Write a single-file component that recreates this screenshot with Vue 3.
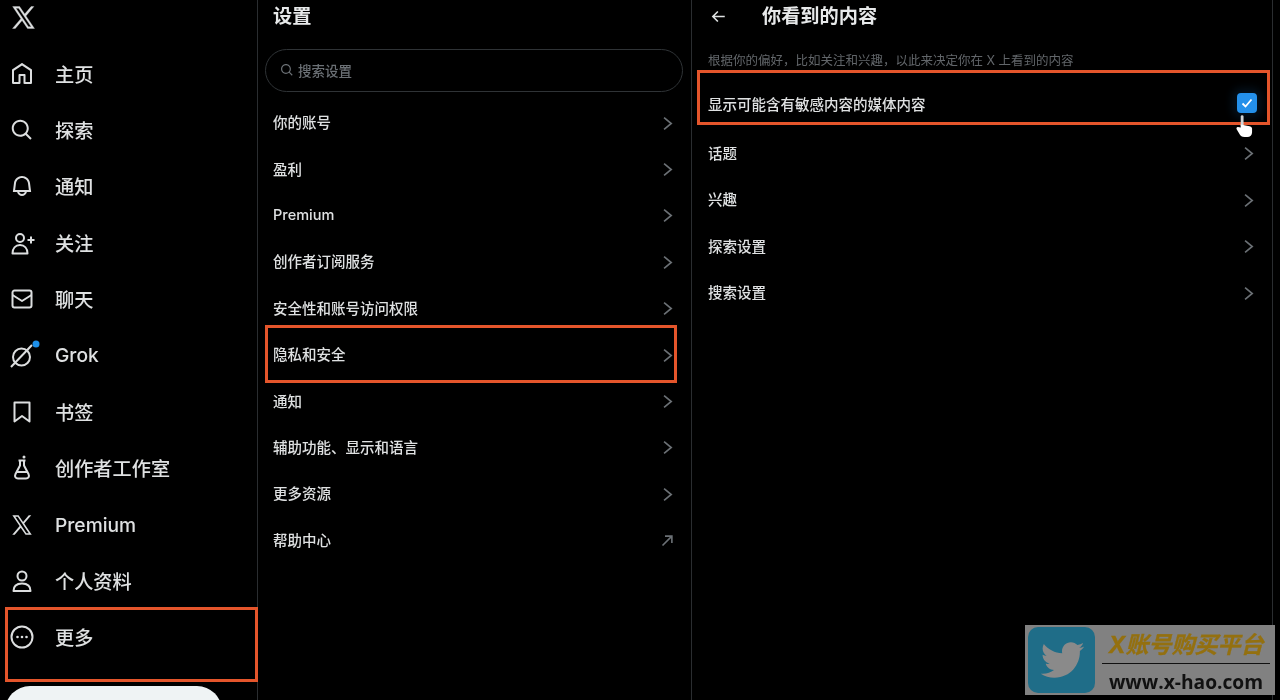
<script setup>
const xLogo = 'M21.742 21.75l-7.563-11.179 7.056-8.321h-2.456l-5.691 6.714-4.54-6.714H2.359l7.29 10.776L2.25 21.75h2.456l6.035-7.118 4.818 7.118h6.191-.008zM7.739 3.818L18.81 20.182h-2.447L5.29 3.818h2.447z'

const nav = [
  { label: '主页', fill: 'M21.591 7.146L12.52 1.157c-.316-.21-.724-.21-1.04 0l-9.071 5.99c-.26.173-.409.456-.409.757v13.183c0 .502.418.913.929.913h6.638c.511 0 .929-.41.929-.913v-7.075h3.008v7.075c0 .502.418.913.929.913h6.639c.51 0 .928-.41.928-.913V7.904c0-.301-.158-.584-.408-.758zM20 20l-4.5.01.011-7.097c0-.502-.418-.913-.928-.913H9.44c-.511 0-.929.41-.929.913L8.5 20H4V8.773l8.011-5.342L20 8.764z' },
  { label: '探索', fill: 'M10.25 3.75c-3.59 0-6.5 2.91-6.5 6.5s2.91 6.5 6.5 6.5c1.795 0 3.419-.726 4.596-1.904 1.178-1.177 1.904-2.801 1.904-4.596 0-3.59-2.91-6.5-6.5-6.5zm-8.5 6.5c0-4.694 3.806-8.5 8.5-8.5s8.5 3.806 8.5 8.5c0 1.986-.682 3.815-1.824 5.262l4.781 4.781-1.414 1.414-4.781-4.781c-1.447 1.142-3.276 1.824-5.262 1.824-4.694 0-8.5-3.806-8.5-8.5z' },
  { label: '通知', fill: 'M19.993 9.042C19.48 5.017 16.054 2 11.996 2s-7.49 3.021-7.999 7.051L2.866 18H7.1c.463 2.282 2.481 4 4.9 4s4.437-1.718 4.9-4h4.236l-1.143-8.958zM12 20c-1.306 0-2.417-.835-2.829-2h5.658c-.412 1.165-1.523 2-2.829 2zm-6.866-4l.847-6.698C6.364 6.272 8.941 4 11.996 4s5.627 2.268 6.013 5.295L18.864 16H5.134z' },
  { label: '关注', stroke: ['M10 3a4 4 0 1 0 0 8 4 4 0 0 0 0-8z', 'M2.500 22.500c0-5 3-8.500 7.500-8.500s7.500 3.500 7.500 8.500z', 'M21 5.500v7M17.500 9h7'] },
  { label: '聊天', stroke: ['M4.500 3.500h15a2 2 0 0 1 2 2v13a2 2 0 0 1-2 2h-15a2 2 0 0 1-2-2v-13a2 2 0 0 1 2-2z', 'M2.500 8l9.500 6 9.500-6'] },
  { label: 'Grok', stroke: ['M11.500 5.500a8.500 8.500 0 1 1 0 17 8.500 8.500 0 0 1 0-17z', 'M1 24 22 2'], dot: true },
  { label: '书签', stroke: ['M4.500 2.500h15v19l-7.500-5.500-7.500 5.500z'] },
  { label: '创作者工作室', stroke: ['M8.500 4.500h7', 'M10 4.500v5L5.500 18c-1.300 2.800.3 4.500 2.500 4.500h8c2.200 0 3.800-1.700 2.500-4.500L14 9.500v-5', 'M7 16h10'], flask: true },
  { label: 'Premium', fill: xLogo },
  { label: '个人资料', stroke: ['M12 2.500a4.500 4.500 0 1 0 0 9 4.500 4.500 0 0 0 0-9z', 'M3.500 22c0-5 3.500-7.500 8.500-7.500s8.500 2.500 8.500 7.500z'] },
  { label: '更多', stroke: ['M12 1.500a10.500 10.500 0 1 0 0 21 10.500 10.500 0 0 0 0-21z'], more: true },
]

const settings = ['你的账号', '盈利', 'Premium', '创作者订阅服务', '安全性和账号访问权限', '隐私和安全', '通知', '辅助功能、显示和语言', '更多资源', '帮助中心']
const contentRows = ['话题', '兴趣', '探索设置', '搜索设置']
</script>

<template>
  <div class="screen">
    <aside class="nav">
      <div class="logo-row">
        <svg class="logo" viewBox="0 0 24 24"><path :d="xLogo" fill="currentColor" stroke="currentColor" stroke-width="0.300" /></svg>
      </div>
      <div v-for="item in nav" :key="item.label" class="nav-item">
        <svg class="icon" viewBox="0 0 24 24">
          <path v-if="item.fill" :d="item.fill" fill="currentColor" />
          <path v-for="d in item.stroke || []" :key="d" :d="d" fill="none" stroke="currentColor" stroke-width="2" stroke-linejoin="round" />
          <circle v-if="item.dot" cx="26" cy="1" r="3.500" fill="#1d8fe8" />
          <circle v-if="item.flask" cx="14" cy="1" r="1.500" fill="currentColor" />
          <template v-if="item.more">
            <circle cx="7.500" cy="12" r="1.300" fill="currentColor" />
            <circle cx="12" cy="12" r="1.300" fill="currentColor" />
            <circle cx="16.500" cy="12" r="1.300" fill="currentColor" />
          </template>
        </svg>
        <span>{{ item.label }}</span>
      </div>
      <div class="post-btn"></div>
      <div class="mark mark-more"></div>
    </aside>

    <section class="settings">
      <h2 class="title settings-title">设置</h2>
      <div class="search">
        <svg class="search-icon" viewBox="0 0 24 24"><path :d="nav[1].fill" fill="currentColor" /></svg>
        <span>搜索设置</span>
      </div>
      <div class="rows">
        <div v-for="(row, i) in settings" :key="row" class="row">
          <span>{{ row }}</span>
          <svg v-if="i < settings.length - 1" class="chev" viewBox="0 0 24 24"><path d="M6.500 2.500 18 12 6.500 21.500" fill="none" stroke="currentColor" stroke-width="2.600" /></svg>
          <svg v-else class="chev" viewBox="0 0 24 24"><path d="M4 20 19 5M8 5h11v11" fill="none" stroke="currentColor" stroke-width="2.600" /></svg>
        </div>
      </div>
      <div class="mark mark-privacy"></div>
    </section>

    <section class="content">
      <header class="content-head">
        <svg class="back" viewBox="0 0 24 24"><path d="M3 12h19M11 4l-8 8 8 8" fill="none" stroke="currentColor" stroke-width="2.600" /></svg>
        <h2 class="title">你看到的内容</h2>
      </header>
      <p class="sub">根据你的偏好，比如关注和兴趣，以此来决定你在 X 上看到的内容</p>
      <div class="row row-check">
        <span>显示可能含有敏感内容的媒体内容</span>
        <span class="check">
          <svg viewBox="0 0 20 20"><path d="M5.500 10.500 8.500 13.500 14.500 6.500" fill="none" stroke="#fff" stroke-width="1.800" /></svg>
        </span>
      </div>
      <div v-for="row in contentRows" :key="row" class="row">
        <span>{{ row }}</span>
        <svg class="chev" viewBox="0 0 24 24"><path d="M6.500 2.500 18 12 6.500 21.500" fill="none" stroke="currentColor" stroke-width="2.600" /></svg>
      </div>
      <div class="mark mark-check"></div>
      <svg class="hand" viewBox="0 0 18 24">
        <path d="M6.500 1.500v10" stroke="#cfd3d6" stroke-width="3" fill="none" stroke-linecap="round" />
        <path d="M2 12.500c-1.500 0-2 1.500-1 3l3 5c1 1.500 2 2.500 5 2.500h3c3 0 5-2 5-5v-4c0-1.500-2-2.500-4-2.500L5 10v3z" fill="#fff" />
      </svg>
    </section>

    <aside class="badge">
      <div class="badge-logo">
        <svg viewBox="0 0 24 24"><path d="M23.643 4.937c-.835.37-1.732.62-2.675.733.962-.576 1.7-1.49 2.048-2.578-.9.534-1.897.922-2.958 1.13-.85-.904-2.06-1.47-3.4-1.47-2.572 0-4.658 2.086-4.658 4.66 0 .364.042.718.12 1.06-3.873-.195-7.304-2.05-9.602-4.868-.4.69-.63 1.49-.63 2.342 0 1.616.823 3.043 2.072 3.878-.764-.025-1.482-.234-2.11-.583v.06c0 2.257 1.605 4.14 3.737 4.568-.392.106-.803.162-1.227.162-.3 0-.593-.028-.877-.082.593 1.85 2.313 3.198 4.352 3.234-1.595 1.25-3.604 1.995-5.786 1.995-.376 0-.747-.022-1.112-.065 2.062 1.323 4.51 2.093 7.14 2.093 8.57 0 13.255-7.098 13.255-13.254 0-.2-.005-.402-.014-.602.91-.658 1.7-1.477 2.323-2.41z" fill="#8a8a8a" /></svg>
      </div>
      <div class="badge-text">
        <div class="badge-name">X账号购买平台</div>
        <div class="badge-url">www.x-hao.com</div>
      </div>
    </aside>
  </div>
</template>

<style scoped>
.screen {
  position: relative;
  display: flex;
  width: 1280px;
  height: 700px;
  overflow: hidden;
  background: #000;
  color: #e7e9ea;
  font-family: Inter, "Noto Sans CJK SC", sans-serif;
  filter: blur(0.7px);
}
.nav {
  position: relative;
  flex: none;
  width: 257px;
  border-right: 1px solid #2a2d30;
}
.logo-row {
  display: flex;
  align-items: center;
  height: 45.6px;
  padding: 0 0 11px 10px;
  box-sizing: border-box;
}
.logo {
  width: 27px;
  height: 27px;
  color: #dcdedf;
}
.nav-item {
  display: flex;
  align-items: center;
  gap: 21px;
  height: 56.35px;
  padding-left: 10px;
  font-size: 19.2px;
  font-weight: 500;
  color: #dfe1e2;
}
.icon {
  flex: none;
  width: 24px;
  height: 24px;
  overflow: visible;
  color: #dcdedf;
}
.post-btn {
  width: 217px;
  height: 50px;
  margin: 21px 0 0 5px;
  border-radius: 25px;
  background: #eff3f4;
}
.settings {
  position: relative;
  flex: none;
  width: 433px;
  border-right: 1px solid #2a2d30;
}
.title {
  margin: 0;
  font-size: 19.2px;
  line-height: 32px;
  font-weight: 700;
  color: #e7e9ea;
}
.settings-title {
  padding-left: 15px;
}
.search {
  display: flex;
  align-items: center;
  gap: 4px;
  box-sizing: border-box;
  width: 418px;
  height: 43px;
  margin: 17px 0 6.500px 7px;
  padding: 0 0 2px 14px;
  border: 1px solid #2f3336;
  border-radius: 22px;
  font-size: 13.500px;
  font-weight: 500;
  color: #6b7075;
}
.search-icon {
  width: 14px;
  height: 14px;
}
.row {
  display: flex;
  align-items: center;
  justify-content: space-between;
  box-sizing: border-box;
  height: 46.4px;
  padding: 0 16px 0 15px;
  font-size: 14.500px;
  font-weight: 500;
  color: #dfe1e2;
}
.chev {
  flex: none;
  width: 15px;
  height: 15px;
  margin: 3px 0.500px 0;
  color: #6b7075;
}
.content {
  position: relative;
  flex: none;
  width: 580px;
  border-right: 1px solid #2a2d30;
}
.content .row {
  padding: 0 16px 0 16px;
}
.content-head {
  display: flex;
  align-items: center;
  gap: 36px;
  height: 32px;
  padding-left: 19px;
}
.back {
  width: 15px;
  height: 15px;
  color: #dfe1e2;
}
.sub {
  margin: 20px 0 0 16px;
  padding-top: 1px;
  font-size: 12.500px;
  line-height: 16px;
  color: #62666a;
}
.content .row-check {
  height: 51.8px;
  padding-right: 15px;
  margin-top: 8.500px;
}
.check {
  display: flex;
  width: 20px;
  height: 20px;
  border-radius: 4px;
  background: #2490ea;
  box-shadow: 0 0 8px 5px rgba(29, 143, 232, 0.12);
}
.hand {
  position: absolute;
  top: 115px;
  left: 544px;
  width: 17px;
  height: 23px;
}
.mark {
  position: absolute;
  box-sizing: border-box;
  border: 3px solid #e4552b;
}
.mark-more {
  top: 607px;
  left: 5px;
  width: 253px;
  height: 75px;
}
.mark-privacy {
  top: 325px;
  left: 7px;
  width: 412px;
  height: 58px;
}
.mark-check {
  top: 70px;
  left: 5px;
  width: 573px;
  height: 55px;
}
.badge {
  position: absolute;
  top: 625px;
  left: 1025px;
  display: flex;
  gap: 7px;
  box-sizing: border-box;
  width: 250px;
  height: 70px;
  padding: 2px 0 0 3px;
  background: #818181;
}
.badge-logo {
  display: flex;
  align-items: center;
  justify-content: center;
  width: 67px;
  height: 66px;
  border-radius: 10px;
  background: #1f6d88;
}
.badge-logo svg {
  width: 46px;
  height: 46px;
}
.badge-text {
  display: flex;
  flex-direction: column;
  width: 168px;
}
.badge-name {
  height: 36px;
  line-height: 36px;
  text-align: center;
  border-bottom: 1px solid #111;
  font-size: 23px;
  font-weight: 700;
  font-style: italic;
  white-space: nowrap;
  color: #94700f;
  -webkit-text-stroke: 0.3px #94700f;
}
.badge-url {
  padding-top: 2px;
  line-height: 31px;
  text-align: center;
  font-family: "Open Sans", sans-serif;
  font-size: 19.200px;
  font-weight: 700;
  white-space: nowrap;
  color: #111;
}
</style>
